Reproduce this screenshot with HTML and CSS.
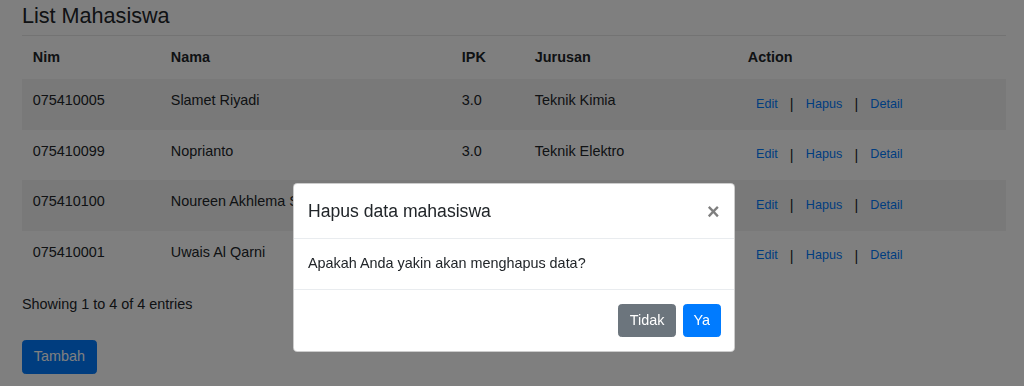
FILE: index.html
```html
<!DOCTYPE html>
<html lang="id">
<head>
<meta charset="utf-8">
<title>List Mahasiswa</title>
<link rel="stylesheet" href="styles.css">
</head>
<body>
<div class="page">
  <h4 class="title">List Mahasiswa</h4>
  <table class="table">
    <colgroup>
      <col class="c-nim"><col class="c-nama"><col class="c-ipk"><col class="c-jur"><col class="c-act">
    </colgroup>
    <thead>
      <tr><th>Nim</th><th>Nama</th><th>IPK</th><th>Jurusan</th><th>Action</th></tr>
    </thead>
    <tbody>
      <tr class="odd"><td>075410005</td><td>Slamet Riyadi</td><td>3.0</td><td>Teknik Kimia</td>
        <td class="act"><a class="lnk">Edit</a> | <a class="lnk">Hapus</a> | <a class="lnk">Detail</a></td></tr>
      <tr><td>075410099</td><td>Noprianto</td><td>3.0</td><td>Teknik Elektro</td>
        <td class="act"><a class="lnk">Edit</a> | <a class="lnk">Hapus</a> | <a class="lnk">Detail</a></td></tr>
      <tr class="odd"><td>075410100</td><td>Noureen Akhlema Shannu</td><td>3.0</td><td>Teknik Kimia</td>
        <td class="act"><a class="lnk">Edit</a> | <a class="lnk">Hapus</a> | <a class="lnk">Detail</a></td></tr>
      <tr><td>075410001</td><td>Uwais Al Qarni</td><td>3.0</td><td>Teknik Informatika</td>
        <td class="act"><a class="lnk">Edit</a> | <a class="lnk">Hapus</a> | <a class="lnk">Detail</a></td></tr>
    </tbody>
  </table>
  <div class="info">Showing 1 to 4 of 4 entries</div>
  <div class="actions"><button class="btn btn-primary">Tambah</button></div>
</div>

<div class="backdrop"></div>
<div class="modal">
  <div class="modal-header">
    <h5 class="modal-title">Hapus data mahasiswa</h5>
    <span class="close">&times;</span>
  </div>
  <div class="modal-body">Apakah Anda yakin akan menghapus data?</div>
  <div class="modal-footer">
    <button class="btn btn-secondary">Tidak</button>
    <button class="btn btn-primary btn-ya">Ya</button>
  </div>
</div>
</body>
</html>
```

FILE: styles.css
```css
* { box-sizing: border-box; }
html, body { margin: 0; padding: 0; }
body {
  font-family: "Liberation Sans", Arial, sans-serif;
  font-size: 14.4px;
  line-height: 21.6px;
  color: #212529;
  background: #fff;
  height: 386px;
  overflow: hidden;
}
.page {
  padding: 3px 18px 0 22px;
}
.title {
  margin: 0;
  font-size: 21.6px;
  font-weight: 500;
  line-height: 26px;
  padding-bottom: 6px;
  border-bottom: 1px solid #e6e6e6;
}
.table {
  width: 100%;
  border-collapse: collapse;
  table-layout: fixed;
}
.c-nim { width: 138px; }
.c-nama { width: 291px; }
.c-ipk { width: 73px; }
.c-jur { width: 213px; }
.c-act { width: 269px; }
.table th, .table td {
  padding: 10.8px;
  text-align: left;
  vertical-align: top;
  white-space: nowrap;
  overflow: hidden;
}
.table th { font-weight: 700; }
.table tbody tr { height: 50.6px; }
.table tr.odd { background: rgba(0,0,0,.05); }
.table td.act {
  padding: 10.8px;
  line-height: 28.4px;
  height: 50.6px;
}
.lnk {
  display: inline-block;
  font-size: 12.6px;
  line-height: 18.9px;
  padding: 3.6px 7.2px;
  border: 1px solid transparent;
  color: #007bff;
  text-decoration: none;
  vertical-align: top;
}
.info {
  padding-top: 11px;
  line-height: 22px;
}
.actions {
  padding-top: 25px;
}
.btn {
  display: inline-block;
  font-family: inherit;
  font-size: 14.4px;
  line-height: 21.6px;
  padding: 5.4px 10.8px;
  border: 1px solid transparent;
  border-radius: 3.6px;
  color: #fff;
  cursor: pointer;
}
.btn-primary { background: #007bff; border-color: #007bff; }
.btn-secondary { background: #6c757d; border-color: #6c757d; }

.backdrop {
  position: fixed;
  inset: 0;
  background: rgba(0,0,0,.5);
  z-index: 10;
}
.modal {
  position: absolute;
  left: 293px;
  top: 183px;
  width: 442px;
  background: #fff;
  border: 1px solid rgba(0,0,0,.2);
  border-radius: 4.3px;
  z-index: 20;
}
.modal-header {
  display: flex;
  align-items: flex-start;
  justify-content: space-between;
  padding: 13.5px 14.4px 13.5px 14px;
  border-bottom: 1px solid #e9ecef;
}
.modal-title {
  margin: 0;
  font-size: 17.6px;
  font-weight: 500;
  line-height: 27px;
}
.close {
  font-size: 21.6px;
  font-weight: 700;
  line-height: 27px;
  color: #000;
  opacity: .5;
}
.modal-body {
  padding: 14px 14.4px 14px 14px;
}
.modal-footer {
  display: flex;
  justify-content: flex-end;
  gap: 7px;
  padding: 14px 13.5px 14px 14.4px;
  border-top: 1px solid #e9ecef;
}
.modal-footer .btn { line-height: 20.6px; }
.modal-footer .btn-ya { padding: 5.4px 9.4px; }
```
